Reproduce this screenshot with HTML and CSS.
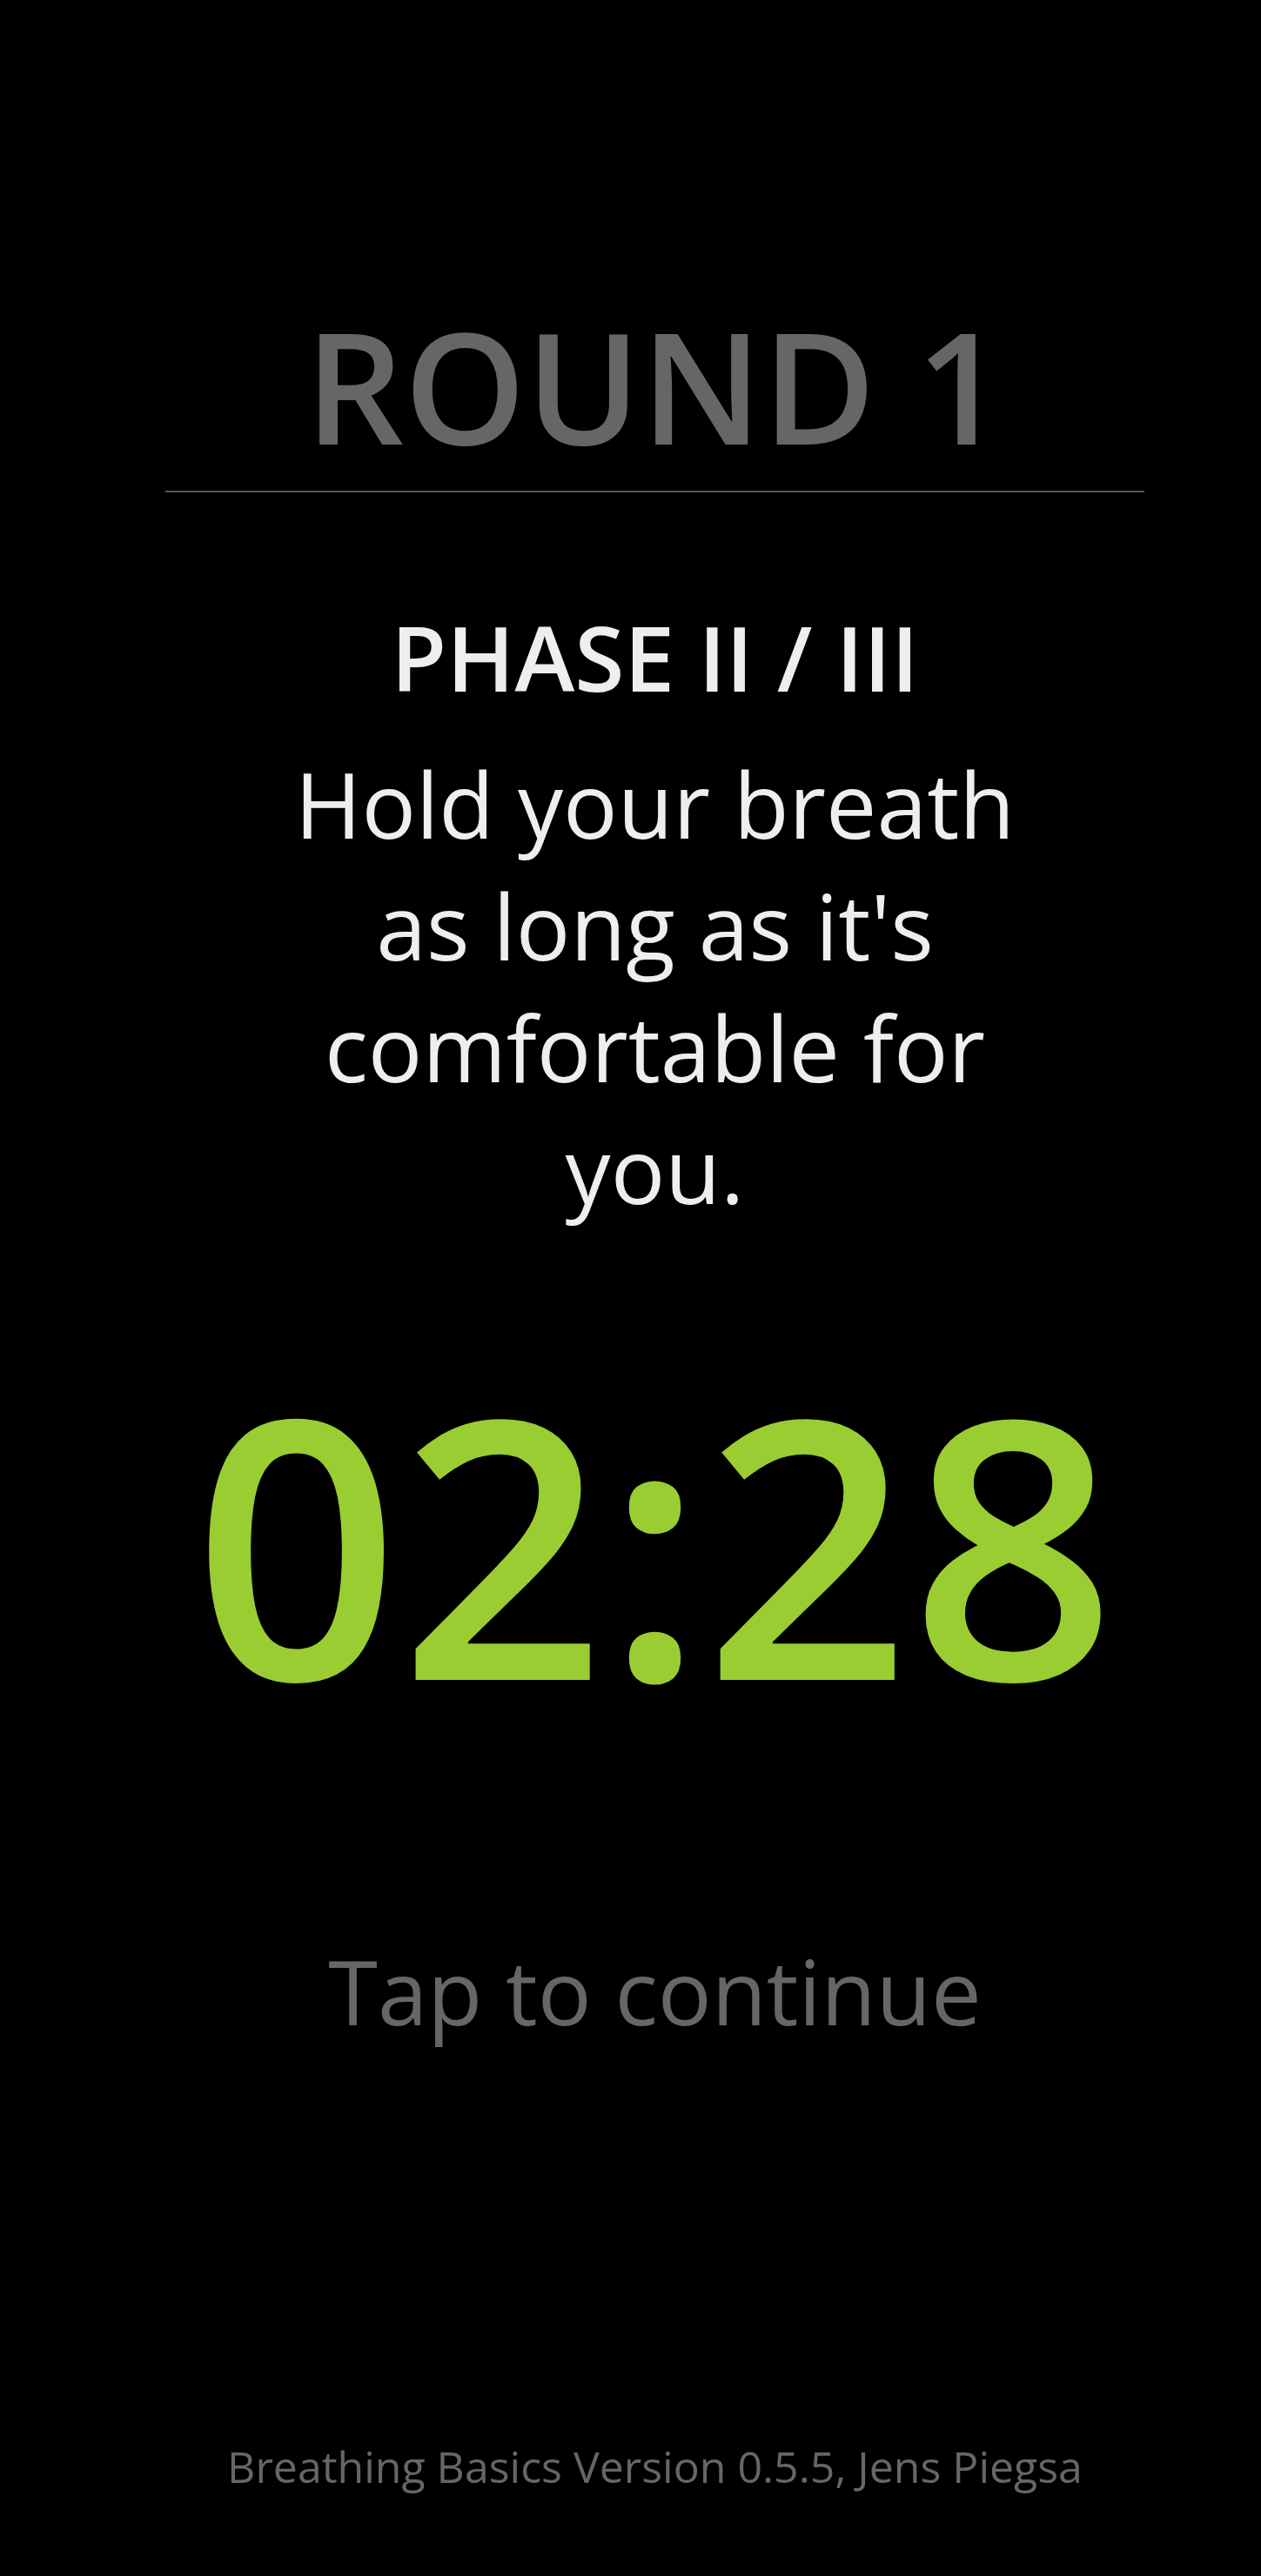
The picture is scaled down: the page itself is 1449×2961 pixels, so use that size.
FILE: index.html
```html
<!DOCTYPE html>
<html lang="en">
<head>
<meta charset="utf-8">
<title>Breathing Basics</title>
<link rel="stylesheet" href="styles.css">
</head>
<body>
<main class="screen">
  <h1 class="round">ROUND 1</h1>
  <hr class="divider">
  <h2 class="phase">PHASE II / III</h2>
  <p class="instruction">Hold your breath as long as it's comfortable for you.</p>
  <div class="timer">02:28</div>
  <div class="tap">Tap to continue</div>
  <footer class="footer">Breathing Basics Version 0.5.5, Jens Piegsa</footer>
</main>
</body>
</html>
```

FILE: styles.css
```css
html, body {
  margin: 0;
  padding: 0;
  background: #000;
}

body {
  font-family: "Open Sans", "Noto Sans", sans-serif;
  min-height: 2961px;
}

.screen {
  display: flex;
  flex-direction: column;
  align-items: center;
  width: 1125px;
  margin-left: 190px;
  text-align: center;
}

.round {
  margin: 353px 0 0 0;
  font-size: 178px;
  line-height: 1;
  font-weight: 600;
  color: #666666;
}

.divider {
  align-self: stretch;
  margin: 33px 0 0 0;
  border: 0;
  height: 2px;
  background: #555555;
}

.phase {
  margin: 137px 0 0 0;
  font-size: 104px;
  line-height: 1;
  font-weight: 600;
  color: #eeeeee;
}

.instruction {
  margin: 47px 0 0 0;
  max-width: 900px;
  font-size: 104px;
  line-height: 140px;
  font-weight: 400;
  color: #eeeeee;
}

.timer {
  margin-top: 149px;
  font-size: 414px;
  line-height: 1;
  font-weight: 600;
  color: #9acd32;
}

.tap {
  margin-top: 260px;
  font-size: 103px;
  line-height: 1;
  font-weight: 400;
  color: #666666;
}

.footer {
  margin-top: 470px;
  font-size: 50px;
  line-height: 1;
  font-weight: 400;
  color: #666666;
}
```
